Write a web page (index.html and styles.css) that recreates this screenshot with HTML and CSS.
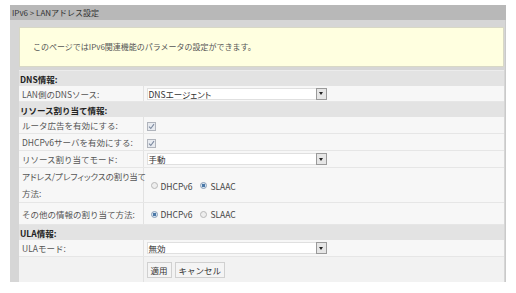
FILE: index.html
```html
<!DOCTYPE html>
<html lang="ja">

<head>
    <meta charset="UTF-8">
    <meta name="viewport" content="width=device-width, initial-scale=1.0">
    <title>IPv6 LANアドレス設定</title>
    <link rel="stylesheet" href="styles.css">
</head>

<body>
    <div class="panel">
        <div class="title">IPv6 &gt; LANアドレス設定</div>
        <div class="panel_body">
            <div class="notice">このページではIPv6関連機能のパラメータの設定ができます。</div>
            <table class="form">
                <colgroup>
                    <col class="label_col">
                    <col>
                </colgroup>
                <tr class="head">
                    <td colspan="2">DNS情報:</td>
                </tr>
                <tr class="row">
                    <td class="label">LAN側のDNSソース:</td>
                    <td class="value">
                        <div class="select"><span>DNSエージェント</span><i class="arrow"></i></div>
                    </td>
                </tr>
                <tr class="head">
                    <td colspan="2">リソース割り当て情報:</td>
                </tr>
                <tr class="row tall">
                    <td class="label">ルータ広告を有効にする:</td>
                    <td class="value">
                        <span class="check"><svg width="9" height="9" viewBox="0 0 9 9"><path d="M2 4.6 L3.8 6.5 L7 2.2" fill="none" stroke="#7d8aa0" stroke-width="1.1"/></svg></span>
                    </td>
                </tr>
                <tr class="row tall">
                    <td class="label">DHCPv6サーバを有効にする:</td>
                    <td class="value">
                        <span class="check"><svg width="9" height="9" viewBox="0 0 9 9"><path d="M2 4.6 L3.8 6.5 L7 2.2" fill="none" stroke="#7d8aa0" stroke-width="1.1"/></svg></span>
                    </td>
                </tr>
                <tr class="row tall">
                    <td class="label">リソース割り当てモード:</td>
                    <td class="value">
                        <div class="select"><span>手動</span><i class="arrow"></i></div>
                    </td>
                </tr>
                <tr class="row double">
                    <td class="label narrow">アドレス/プレフィックスの割り当て<br>方法:</td>
                    <td class="value">
                        <span class="radio"></span><span class="opt">DHCPv6</span>
                        <span class="radio on"></span><span class="opt">SLAAC</span>
                    </td>
                </tr>
                <tr class="row mid">
                    <td class="label">その他の情報の割り当て方法:</td>
                    <td class="value">
                        <span class="radio on"></span><span class="opt">DHCPv6</span>
                        <span class="radio"></span><span class="opt">SLAAC</span>
                    </td>
                </tr>
                <tr class="head">
                    <td colspan="2">ULA情報:</td>
                </tr>
                <tr class="row tall">
                    <td class="label">ULAモード:</td>
                    <td class="value">
                        <div class="select"><span>無効</span><i class="arrow"></i></div>
                    </td>
                </tr>
                <tr class="row buttons">
                    <td class="label"></td>
                    <td class="value">
                        <button>適用</button><button>キャンセル</button>
                    </td>
                </tr>
            </table>
        </div>
    </div>
</body>

</html>
```

FILE: styles.css
```css
body {
    margin: 0;
    padding: 5px 10px;
    background: #fff;
    font-family: "Noto Sans CJK JP", "Noto Sans", sans-serif;
    font-size: 8.5px;
    line-height: 12px;
    color: #444;
}

.panel {
    width: 496px;
}

.title {
    height: 15px;
    line-height: 15px;
    padding-left: 2px;
    background: #b8b8b8;
    color: #333;
    font-size: 8px;
}

.panel_body {
    background: #d6d6d6;
    padding: 7px 1px 0 9px;
    border-right: 1px solid #cacaca;
}

.notice {
    height: 40px;
    box-sizing: border-box;
    padding-left: 13px;
    line-height: 38px;
    font-size: 8px;
    background: #ffffe0;
    border: 1px solid #d8d8c6;
    color: #555;
}

.form {
    width: 100%;
    margin-top: 3px;
    border-collapse: collapse;
    table-layout: fixed;
    background: #f7f7f7;
}

.label_col {
    width: 124px;
}

.form td {
    padding: 0;
    vertical-align: middle;
    white-space: nowrap;
}

.head td {
    height: 15px;
    background: #e3e3e3;
    font-weight: bold;
    color: #222;
    padding-left: 1px;
    border-top: 1px solid #ececec;
}

.row td {
    height: 15px;
    border-bottom: 1px solid #e6e6e6;
}

.row.tall td {
    height: 16px;
}

.row.double td {
    height: 34px;
}

.row.mid td {
    height: 21px;
}

.row.buttons td {
    height: 25px;
    border-bottom: none;
    background: #f2f2f2;
}

.label {
    padding-left: 3px !important;
    border-right: 1px solid #e2e2e2;
    color: #555;
}

.label.narrow {
    font-feature-settings: "palt";
    line-height: 17px;
}

.value {
    padding-left: 3px !important;
}

.select {
    display: flex;
    width: 180px;
    height: 12px;
    box-sizing: border-box;
    background: #fff;
    border: 1px solid #e0e0e0;
}

.select span {
    flex: 1;
    line-height: 10px;
    padding-left: 1px;
    color: #333;
    font-feature-settings: "palt";
}

.select .arrow {
    width: 11px;
    height: 12px;
    margin: -1px -1px 0 0;
    box-sizing: border-box;
    border: 1px solid #9a9a9a;
    background: #e6e6e6;
    display: flex;
    align-items: center;
    justify-content: center;
}

.select .arrow::after {
    content: "";
    border-left: 2px solid transparent;
    border-right: 2px solid transparent;
    border-top: 3px solid #222;
}

.check {
    display: inline-flex;
    width: 9px;
    height: 9px;
    box-sizing: border-box;
    border: 1px solid #b0b4bc;
    background: #e8ebf0;
    vertical-align: middle;
}

.check svg {
    margin: -1px;
}

.radio {
    display: inline-block;
    width: 7px;
    height: 7px;
    box-sizing: border-box;
    border-radius: 50%;
    border: 1px solid #b8b8b8;
    background: #eee;
    vertical-align: middle;
    margin: 0 3px 0 4px;
}

.radio.on {
    border-color: #8aa0b8;
    background: radial-gradient(circle, #4a78a8 0 1.6px, #d8e4f0 2px);
}

.opt {
    vertical-align: middle;
    color: #444;
    margin-right: 2px;
}

button {
    font-family: inherit;
    font-size: 8.5px;
    height: 16px;
    padding: 0 3px;
    margin-right: 3px;
    background: #f4f4f4;
    border: 1px solid #d0d0d0;
    color: #333;
    line-height: 14px;
}
```
